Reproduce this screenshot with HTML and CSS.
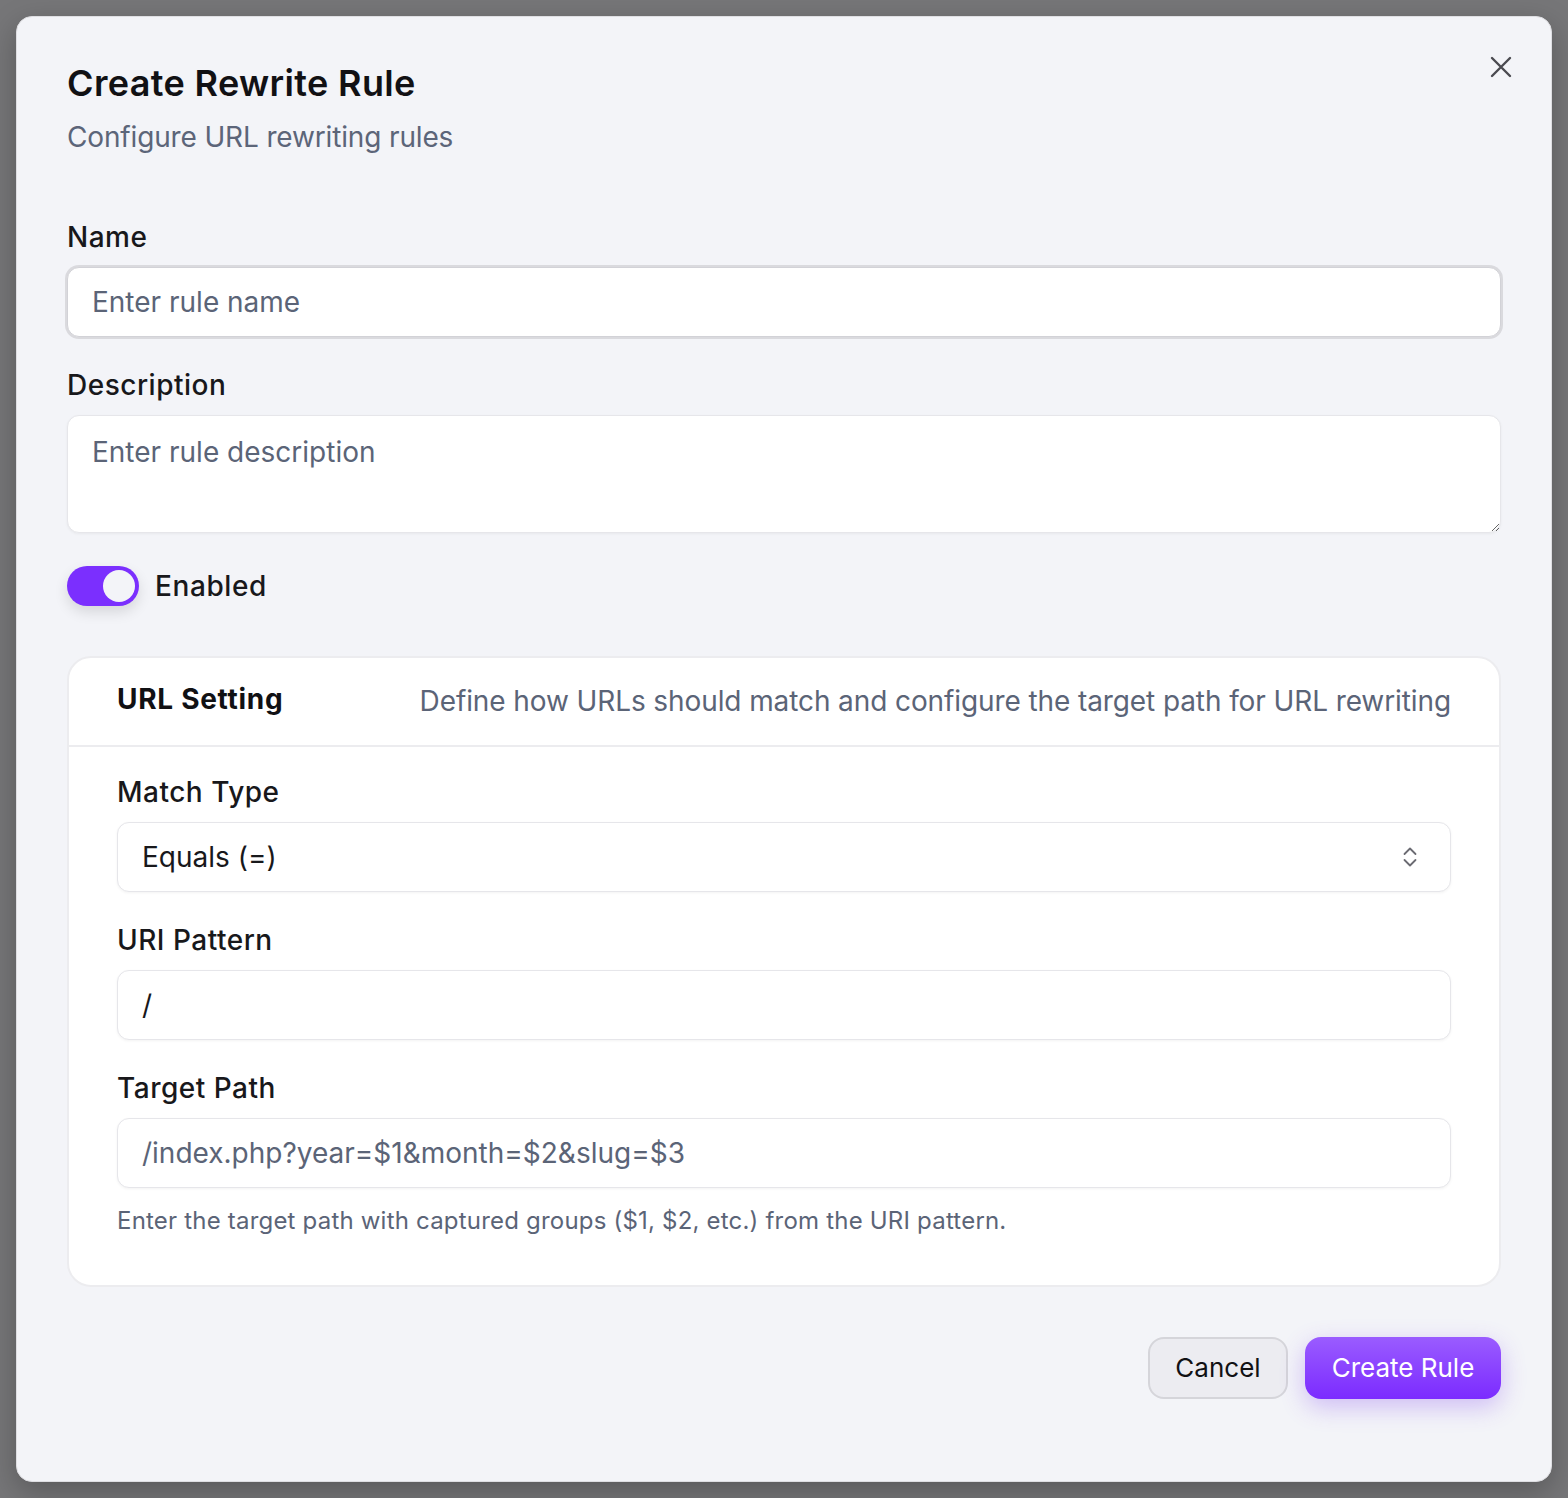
FILE: index.html
```html
<!DOCTYPE html>
<html lang="en">

<head>
    <meta charset="UTF-8">
    <meta name="viewport" content="width=device-width, initial-scale=1.0">
    <title>Create Rewrite Rule</title>
    <link rel="stylesheet" href="styles.css">
</head>

<body>
    <div class="modal">
        <button class="close-btn" type="button" aria-label="Close">
            <svg width="22" height="22" viewBox="0 0 22 22" fill="none" stroke="#4a4a50" stroke-width="2.4" stroke-linecap="round">
                <path d="M2 2 L20 20 M20 2 L2 20" />
            </svg>
        </button>

        <div class="modal-header">
            <h1>Create Rewrite Rule</h1>
            <p class="subtitle">Configure URL rewriting rules</p>
        </div>

        <form class="rule-form">
            <div class="field">
                <label for="name">Name</label>
                <input type="text" id="name" class="input focused" placeholder="Enter rule name">
            </div>

            <div class="field">
                <label for="description">Description</label>
                <textarea id="description" class="input textarea" placeholder="Enter rule description"></textarea>
            </div>

            <div class="toggle-row">
                <span class="toggle"><span class="knob"></span></span>
                <span class="toggle-label">Enabled</span>
            </div>

            <div class="card">
                <div class="card-header">
                    <h2>URL Setting</h2>
                    <p>Define how URLs should match and configure the target path for URL rewriting</p>
                </div>
                <div class="card-body">
                    <div class="field">
                        <label for="match_type">Match Type</label>
                        <div class="select">
                            <span>Equals (=)</span>
                            <svg width="14" height="22" viewBox="0 0 14 22" fill="none" stroke="#6b6b72" stroke-width="1.8" stroke-linecap="round" stroke-linejoin="round">
                                <path d="M1.5 8 L7 2.5 L12.5 8" />
                                <path d="M1.5 14 L7 19.5 L12.5 14" />
                            </svg>
                        </div>
                    </div>

                    <div class="field">
                        <label for="pattern">URI Pattern</label>
                        <input type="text" id="pattern" class="input" value="/">
                    </div>

                    <div class="field last">
                        <label for="target">Target Path</label>
                        <input type="text" id="target" class="input" placeholder="/index.php?year=$1&amp;month=$2&amp;slug=$3">
                    </div>
                    <p class="helper">Enter the target path with captured groups ($1, $2, etc.) from the URI pattern.</p>
                </div>
            </div>

            <div class="footer">
                <button type="button" class="btn btn-cancel">Cancel</button>
                <button type="button" class="btn btn-primary">Create Rule</button>
            </div>
        </form>
    </div>
</body>

</html>
```

FILE: styles.css
```css
/* Modal styles */
* {
    box-sizing: border-box;
}

body {
    font-family: Inter, "Noto Sans", sans-serif;
    background-color: #767678;
    margin: 0;
    padding: 16px;
    color: #18181b;
}

.modal {
    position: relative;
    background-color: #f3f4f8;
    border: 1px solid #dedee2;
    border-radius: 16px;
    box-shadow: 0 10px 30px rgba(0, 0, 0, 0.25);
    padding: 44px 50px 82px;
}

.close-btn {
    position: absolute;
    top: 30px;
    right: 30px;
    width: 40px;
    height: 40px;
    border: none;
    background: none;
    padding: 0;
    display: flex;
    align-items: center;
    justify-content: center;
    cursor: pointer;
}

.modal-header h1 {
    margin: 0;
    font-size: 36px;
    line-height: 44px;
    font-weight: 600;
    letter-spacing: 0.35px;
    color: #111114;
}

.subtitle {
    margin: 12px 0 0;
    font-size: 28px;
    line-height: 40px;
    letter-spacing: -0.15px;
    color: #5c6579;
}

.rule-form {
    margin-top: 60px;
}

.field {
    display: flex;
    flex-direction: column;
    margin-bottom: 28px;
}

.field.last {
    margin-bottom: 0;
}

label {
    font-size: 28px;
    line-height: 40px;
    font-weight: 500;
    letter-spacing: 0.5px;
    margin-bottom: 10px;
}

.input {
    height: 70px;
    width: 100%;
    border: 1px solid #e6e6ea;
    border-radius: 12px;
    background-color: #fff;
    padding: 0 24px;
    font-family: inherit;
    font-size: 28px;
    color: #18181b;
    box-shadow: 0 1px 3px rgba(0, 0, 0, 0.05);
}

.input::placeholder {
    color: #5b6477;
}

.input.focused {
    border-color: #d2d2d7;
    box-shadow: 0 0 0 2px #dadade;
}

.textarea {
    height: 118px;
    padding: 16px 24px;
    line-height: 40px;
    resize: vertical;
}

.toggle-row {
    display: flex;
    align-items: center;
    gap: 16px;
    margin-top: 33px;
}

.toggle {
    width: 72px;
    height: 40px;
    border-radius: 20px;
    background-color: #7b2ffe;
    display: flex;
    align-items: center;
    justify-content: flex-end;
    padding: 4px;
    box-shadow: 0 6px 14px rgba(0, 0, 0, 0.12);
}

.knob {
    width: 32px;
    height: 32px;
    border-radius: 50%;
    background-color: #f3f4f8;
}

.toggle-label {
    font-size: 28px;
    line-height: 40px;
    font-weight: 500;
    letter-spacing: 0.6px;
}

.card {
    margin-top: 50px;
    background-color: #fff;
    border: 2px solid #ececef;
    border-radius: 24px;
}

.card-header {
    display: flex;
    align-items: center;
    justify-content: space-between;
    height: 88.5px;
    padding: 0 48px;
    border-bottom: 2px solid #ececef;
}

.card-header h2 {
    margin: 0 0 4px;
    font-size: 28px;
    line-height: 40px;
    font-weight: 700;
    letter-spacing: 0.7px;
    color: #111114;
}

.card-header p {
    margin: 0;
    font-size: 28px;
    line-height: 40px;
    letter-spacing: -0.1px;
    color: #5b6477;
}

.card-body {
    padding: 25px 48px 48px;
}

.select {
    height: 70px;
    border: 1px solid #e6e6ea;
    border-radius: 12px;
    background-color: #fff;
    padding: 0 33px 0 24px;
    display: flex;
    align-items: center;
    justify-content: space-between;
    font-size: 28px;
    box-shadow: 0 1px 3px rgba(0, 0, 0, 0.05);
}

.helper {
    margin: 17px 0 0;
    font-size: 24px;
    line-height: 32px;
    letter-spacing: 0.2px;
    color: #5b6477;
}

.footer {
    display: flex;
    justify-content: flex-end;
    gap: 17px;
    margin-top: 50px;
}

.btn {
    height: 62px;
    border-radius: 16px;
    font-family: inherit;
    font-size: 26px;
    font-weight: 400;
    cursor: pointer;
}

.btn-cancel {
    width: 140px;
    background-color: #ececf1;
    border: 2px solid #d5d5da;
    color: #111114;
}

.btn-primary {
    width: 196px;
    border: none;
    color: #fff;
    background: linear-gradient(180deg, #9a5cff 0%, #7b2bff 100%);
    box-shadow: 0 8px 24px rgba(124, 58, 237, 0.3);
}
```
